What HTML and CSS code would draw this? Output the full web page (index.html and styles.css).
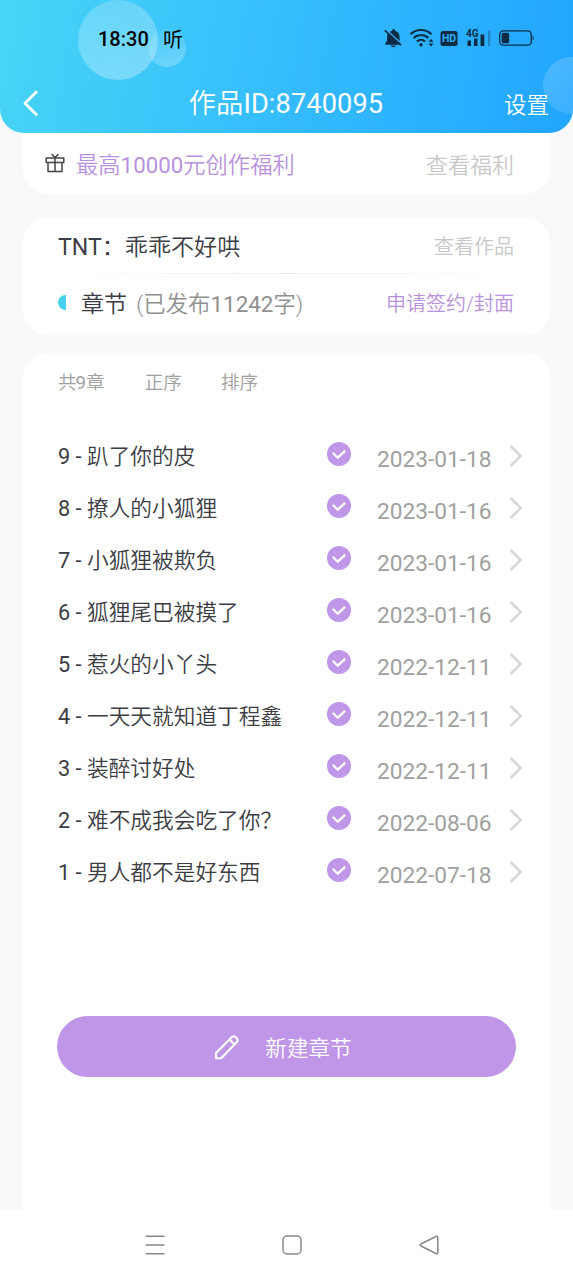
FILE: index.html
```html
<!DOCTYPE html>
<html lang="zh-CN">
<head>
    <meta charset="UTF-8">
    <meta name="viewport" content="width=device-width, initial-scale=1.0">
    <title>作品ID:8740095</title>
    <link rel="stylesheet" href="styles.css">
</head>
<body>
    <header class="header">
        <span class="bubble bubble-large"></span>
        <span class="bubble bubble-small"></span>
        <span class="bubble bubble-right"></span>

        <div class="status-bar">
            <span class="time">18:30</span>
            <span class="listen">听</span>
            <svg class="status-icons" width="152" height="24" viewBox="0 0 152 24">
                <!-- muted bell -->
                <path d="M8.200 3.800V2.300h2.800v1.500c3.200.8 4.600 3.200 4.600 6.500v3.500l1.700 2.200v1.700H1.300V16L3 13.800v-3.500c0-3.300 1.800-5.700 5.200-6.500zM6.600 18.500h5.400c-.4 2.300-5 2.300-5.400 0z"/>
                <path d="M1.400 2.400 18.200 17.400" stroke="#2eb3ff" stroke-width="1.600"/>
                <path d="M.800 3.400 17 18.200" stroke="#0c2c45" stroke-width="1.700"/>
                <!-- wifi -->
                <g fill="none" stroke="#0c2c45" stroke-width="2.200">
                    <path d="M26.500 7.200c5.800-5.600 15.200-5.600 21 0"/>
                    <path d="M29.700 11c4.200-4 10.400-4 14.600 0"/>
                    <path d="M32.900 14.500c2.400-2.200 5.800-2.200 8.200 0"/>
                </g>
                <circle cx="37" cy="17.800" r="1.700"/>
                <path d="M44.500 14.800h5L47 11.900zM44.500 16.600h5L47 19.500z"/>
                <!-- hd -->
                <rect x="56.500" y="4" width="17" height="15" rx="2.500"/>
                <text class="hd-text" x="65" y="15.400" text-anchor="middle">HD</text>
                <!-- signal -->
                <text class="net-text" x="82" y="9.500">4G</text>
                <path d="M83.500 13.500h3.500V19h-3.500zM90 11.500h3.500V19H90zM96.500 7.500h3.800V19h-3.800z"/>
                <path d="M104 3.500h2.300V19H104z" opacity=".3"/>
                <!-- battery -->
                <rect x="115.700" y="3.800" width="31.600" height="14.400" rx="3.600" fill="none" stroke="#0c2c45" stroke-width="1.300"/>
                <rect x="117.600" y="5.800" width="7.600" height="10.400" rx="1.600"/>
                <path d="M148.600 8.500c1.500.6 1.500 4.400 0 5z"/>
            </svg>
        </div>

        <div class="title-bar">
            <a href="#" class="back" aria-label="返回">
                <svg width="18" height="28" viewBox="0 0 18 28">
                    <path d="M14.300 2 3 13.300l11.300 11.300" fill="none" stroke="#fff" stroke-width="2.800" stroke-linecap="round" stroke-linejoin="round"/>
                </svg>
            </a>
            <h1>作品<span class="num">ID:8740095</span></h1>
            <a href="#" class="settings">设置</a>
        </div>
    </header>

    <main class="content">
        <section class="card welfare">
            <svg class="gift" width="20" height="20" viewBox="0 0 20 20" fill="none" stroke="#444" stroke-width="1.500" stroke-linejoin="round">
                <path d="M1.200 5h17.600v4.500H1.200zM3 9.500h14v9H3zM10 5v13.500"/>
                <path d="M7 1.500 10 4.800l3-3.300" stroke-linecap="round"/>
            </svg>
            <a href="#" class="welfare-title">最高<span class="num">10000</span>元创作福利</a>
            <a href="#" class="link-grey">查看福利</a>
        </section>

        <section class="card book">
            <div class="book-row book-name">
                <h2><span class="num">TNT</span>：乖乖不好哄</h2>
                <a href="#" class="link-grey">查看作品</a>
            </div>
            <div class="book-row book-chapters">
                <span class="half-dot"></span>
                <h2>章节</h2>
                <span class="word-count">(已发布<span class="num">11242</span>字)</span>
                <a href="#" class="link-purple">申请签约/封面</a>
            </div>
        </section>

        <section class="card chapters">
            <div class="toolbar">
                <span>共<span class="num">9</span>章</span>
                <span>正序</span>
                <span>排序</span>
            </div>

            <ul class="chapter-list" id="chapterList"></ul>

            <button class="new-btn">
                <svg width="26" height="26" viewBox="0 0 26 26" fill="none" stroke="#fff" stroke-width="2.100" stroke-linejoin="round">
                    <path d="M2 24.200v-5.200L17.700 3.300c1.300-1.300 2.800-1.300 4-.1l1.100 1.100c1.200 1.200 1.200 2.700-.1 4L7.200 24.200zM15.500 5.600l5.200 5.200"/>
                </svg>
                <span>新建章节</span>
            </button>
        </section>
    </main>

    <nav class="system-nav">
        <svg width="22" height="22" viewBox="0 0 22 22"><path d="M1.500 2.200h19M1.500 11h19M1.500 19.700h19"/></svg>
        <svg width="22" height="22" viewBox="0 0 22 22"><rect x="2" y="2" width="18" height="18" rx="4"/></svg>
        <svg width="22" height="22" viewBox="0 0 22 22"><path d="M19.800 3.600v14.800c0 1.300-.8 1.700-1.900 1.100L3 12c-1.200-.6-1.200-1.400 0-2l14.900-7.500c1.100-.6 1.900-.2 1.900 1.100z"/></svg>
    </nav>

    <script>
        const chapters = [
            { no: 9, name: '趴了你的皮', date: '2023-01-18' },
            { no: 8, name: '撩人的小狐狸', date: '2023-01-16' },
            { no: 7, name: '小狐狸被欺负', date: '2023-01-16' },
            { no: 6, name: '狐狸尾巴被摸了', date: '2023-01-16' },
            { no: 5, name: '惹火的小丫头', date: '2022-12-11' },
            { no: 4, name: '一天天就知道丁程鑫', date: '2022-12-11' },
            { no: 3, name: '装醉讨好处', date: '2022-12-11' },
            { no: 2, name: '难不成我会吃了你？', date: '2022-08-06' },
            { no: 1, name: '男人都不是好东西', date: '2022-07-18' }
        ];

        document.getElementById('chapterList').innerHTML = chapters.map(c => `
            <li class="chapter">
                <span class="chapter-name"><span class="num">${c.no} - </span>${c.name}</span>
                <svg class="check" width="24" height="24" viewBox="0 0 24 24">
                    <circle cx="12" cy="12" r="12" fill="#bf96e8"/>
                    <path d="M6.500 11.500l4.300 4.200 6.700-6.400" fill="none" stroke="#fff" stroke-width="2.300" stroke-linecap="round"/>
                </svg>
                <span class="chapter-date">${c.date}</span>
                <svg class="arrow" width="14" height="22" viewBox="0 0 14 22">
                    <path d="M1.500 1 11.700 11 1.500 21" fill="none" stroke="#d8d8d8" stroke-width="2.600"/>
                </svg>
            </li>`).join('');
    </script>
</body>
</html>
```

FILE: styles.css
```css
* {
    box-sizing: border-box;
}
body {
    font-family: Roboto, "Noto Sans CJK SC", sans-serif;
    font-weight: 350;
    background-color: #f9f9f9;
    color: #3c3c44;
    margin: 0;
    height: 1280px;
    display: flex;
    flex-direction: column;
    overflow: hidden;
}
a {
    color: inherit;
    text-decoration: none;
}
h1,
h2 {
    margin: 0;
    font-weight: 350;
}
svg {
    display: block;
    flex: none;
}
.num {
    font-weight: 400;
}

/* header */
.header {
    position: relative;
    height: 133px;
    flex: none;
    overflow: hidden;
    border-radius: 0 0 24px 24px;
    background: linear-gradient(100deg, #48d5f5 0%, #35bcfd 50%, #22a5ff 100%);
    color: #fff;
}
.bubble {
    position: absolute;
    border-radius: 50%;
}
.bubble-large {
    left: 78px;
    top: 0;
    width: 80px;
    height: 80px;
    background: linear-gradient(160deg, rgba(255, 255, 255, 0.18), rgba(255, 255, 255, 0.32));
}
.bubble-small {
    left: 148px;
    top: 29px;
    width: 38px;
    height: 38px;
    background: linear-gradient(160deg, rgba(255, 255, 255, 0.04), rgba(255, 255, 255, 0.28));
}
.bubble-right {
    left: 543px;
    top: 57px;
    width: 57px;
    height: 57px;
    background: linear-gradient(160deg, rgba(255, 255, 255, 0.18), rgba(255, 255, 255, 0.1));
}
.status-bar {
    position: relative;
    height: 76px;
    display: flex;
    align-items: center;
    padding: 1px 37px 0 98px;
    color: #000;
}
.time {
    width: 65px;
    font-size: 20px;
    font-weight: 500;
}
.listen {
    font-size: 20px;
    font-weight: 400;
}
.status-icons {
    margin-left: auto;
    fill: #0c2c45;
}
.hd-text {
    font-size: 10.5px;
    font-weight: 700;
    fill: #2eb3ff;
}
.net-text {
    font-size: 10px;
    font-weight: 700;
}
.title-bar {
    position: relative;
    height: 55px;
    display: grid;
    grid-template-columns: 1fr auto 1fr;
    align-items: center;
    padding: 0 24px 0 22px;
}
.title-bar h1 {
    padding: 3px 0 0 1px;
    font-size: 27.2px;
    letter-spacing: 0.1px;
    line-height: 1;
}
.settings {
    justify-self: end;
    font-size: 22.5px;
    padding-bottom: 2px;
}

/* cards */
.content {
    flex: 1;
    display: flex;
    flex-direction: column;
    padding: 0 23px;
}
.card {
    background-color: #fff;
    border-radius: 25px;
}
.link-grey {
    margin-left: auto;
    color: #c8c8c8;
}
.link-purple {
    margin-left: auto;
    color: #b892dc;
}
.welfare {
    height: 61px;
    display: flex;
    align-items: center;
    padding: 0 36px 1px 22px;
    border-radius: 0 0 25px 25px;
    font-size: 22px;
}
.welfare-title {
    margin-left: 11px;
    font-size: 22.3px;
    color: #b892dc;
}
.book {
    height: 117px;
    margin-top: 24px;
    padding: 0 36px 0 35px;
}
.book h2 {
    font-size: 23.1px;
}
.book-row {
    display: flex;
    align-items: center;
    font-size: 20px;
}
.book-name {
    height: 56px;
    padding-bottom: 1px;
    border-bottom: 1px solid;
    border-image: linear-gradient(90deg, transparent, #ececec 50%, transparent) 1;
}
.book-chapters {
    height: 59px;
    padding-bottom: 3px;
}
.half-dot {
    width: 8px;
    height: 15px;
    margin-right: 15px;
    border-radius: 8px 0 0 8px;
    background-color: #48d1ee;
}
.word-count {
    margin-left: 9px;
    font-size: 22.4px;
    color: #909090;
}

/* chapter list */
.chapters {
    flex: 1;
    margin-top: 18px;
    padding: 0 0 0 35px;
    border-radius: 25px 25px 0 0;
}
.toolbar {
    height: 76px;
    display: flex;
    gap: 40px;
    padding-top: 14px;
    font-size: 18.6px;
    color: #a0a0a0;
}
.toolbar span:last-child {
    margin-left: -1px;
}
.chapter-list {
    list-style: none;
    margin: 0;
    padding: 0;
}
.chapter {
    height: 52px;
    display: grid;
    grid-template-columns: 269px 50px 132px 14px;
    align-items: center;
}
.chapter-name {
    padding-bottom: 2px;
    font-size: 21.7px;
    white-space: nowrap;
}
.check {
    margin-bottom: 2px;
}
.chapter-date {
    padding-top: 8px;
    font-size: 22.7px;
    font-weight: 400;
    color: #a0a0a0;
}
.arrow {
    margin-top: 1px;
}
.new-btn {
    width: 459px;
    height: 61px;
    margin: 119px 0 0 -1px;
    padding: 0 7px 0 0;
    display: flex;
    justify-content: center;
    align-items: center;
    gap: 25px;
    border: 0;
    border-radius: 31px;
    background-color: #bf96e8;
    color: #fff;
    font-family: inherit;
    font-size: 21.6px;
    font-weight: 350;
}

/* system navigation */
.system-nav {
    height: 70px;
    flex: none;
    display: flex;
    justify-content: space-between;
    align-items: center;
    padding: 0 133px 0 144px;
    background-color: #fff;
}
.system-nav svg {
    fill: none;
    stroke: #888;
    stroke-width: 1.5;
}
```
